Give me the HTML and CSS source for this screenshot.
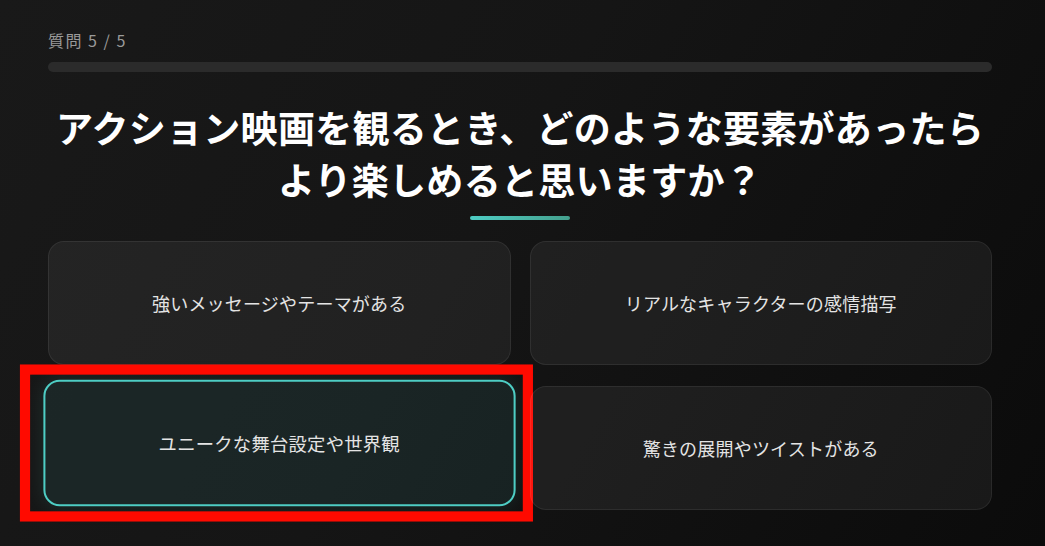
FILE: index.html
```html
<!DOCTYPE html>
<html lang="ja">
<head>
    <meta charset="UTF-8">
    <meta name="viewport" content="width=device-width, initial-scale=1.0">
    <title>アクション映画診断</title>
    <link rel="stylesheet" href="styles.css">
</head>
<body>

    <div class="quiz">
        <div class="progress-label">質問 5 / 5</div>
        <div class="progress-track"></div>

        <h1 class="question">アクション映画を観るとき、どのような要素があったら<br>より楽しめると思いますか？</h1>
        <div class="question-line"></div>

        <div class="options">
            <button class="option">強いメッセージやテーマがある</button>
            <button class="option">リアルなキャラクターの感情描写</button>
            <button class="option selected">ユニークな舞台設定や世界観<span class="highlight"></span></button>
            <button class="option">驚きの展開やツイストがある</button>
        </div>
    </div>

</body>
</html>
```

FILE: styles.css
```css
body {
    font-family: "Noto Sans CJK JP", "Noto Sans", sans-serif;
    background: linear-gradient(120deg, #191919 0%, #151515 45%, #0b0b0b 100%);
    margin: 0;
    padding: 0;
    height: 100vh;
    overflow: hidden;
    color: #ffffff;
}

.quiz {
    width: 944px;
    padding: 30px 0 0 48px;
}

.progress-label {
    font-size: 16px;
    line-height: 20px;
    letter-spacing: 1.5px;
    color: #9a9a9a;
}

.progress-track {
    height: 10px;
    margin-top: 12px;
    border-radius: 5px;
    background-color: #2b2b2b;
}

.question {
    margin: 29px 0 0;
    font-size: 37px;
    line-height: 52px;
    font-weight: 700;
    letter-spacing: 0.3px;
    text-align: center;
    color: #ffffff;
}

.question-line {
    width: 100px;
    height: 4px;
    margin: 11px auto 0;
    border-radius: 2px;
    background: linear-gradient(90deg, #4ecdc4, #44a08d);
}

.options {
    display: grid;
    grid-template-columns: 1fr 1fr;
    column-gap: 19px;
    row-gap: 21px;
    margin-top: 21px;
}

.option {
    position: relative;
    height: 124px;
    font-family: inherit;
    font-size: 18px;
    letter-spacing: 0.2px;
    color: #e4e4e4;
    background-color: rgba(255, 255, 255, 0.055);
    border: 1px solid rgba(255, 255, 255, 0.07);
    border-radius: 16px;
    cursor: pointer;
}

.option.selected {
    background-color: rgba(78, 205, 196, 0.09);
    border: 2px solid #4ecdc4;
    transform: translateY(-5px) scale(1.02);
    box-shadow: 0 0 20px rgba(78, 205, 196, 0.12);
}

/* annotation frame from the screenshot */
.highlight {
    position: absolute;
    top: -17px;
    right: -19px;
    bottom: -17px;
    left: -25px;
    border: 10px solid #ff0a00;
    pointer-events: none;
}
```
